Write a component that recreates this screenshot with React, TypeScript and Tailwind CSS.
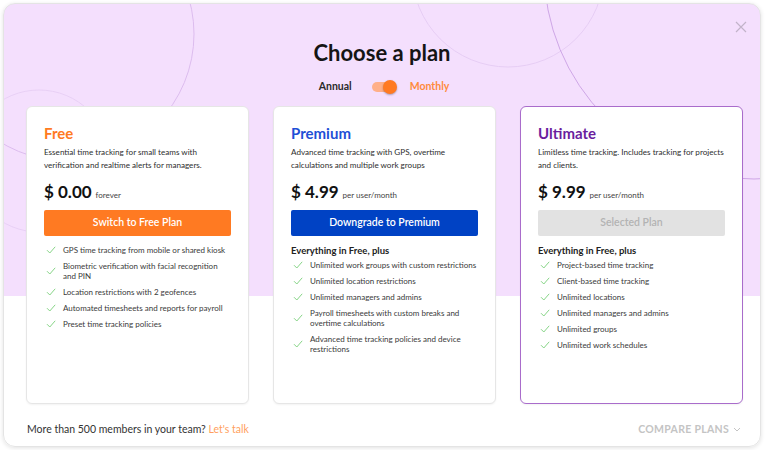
import React from 'react'

const plans = [
  {
    name: 'Free',
    nameColor: 'text-[#ff7a22]',
    desc: 'Essential time tracking for small teams with verification and realtime alerts for managers.',
    price: '$ 0.00',
    per: 'forever',
    button: 'Switch to Free Plan',
    buttonClass: 'bg-[#ff7a22] text-white',
    cardClass: 'border border-[#e6e6e6]',
    heading: '',
    features: [
      'GPS time tracking from mobile or shared kiosk',
      'Biometric verification with facial recognition and PIN',
      'Location restrictions with 2 geofences',
      'Automated timesheets and reports for payroll',
      'Preset time tracking policies',
    ],
  },
  {
    name: 'Premium',
    nameColor: 'text-[#1f4fd6]',
    desc: 'Advanced time tracking with GPS, overtime calculations and multiple work groups',
    price: '$ 4.99',
    per: 'per user/month',
    button: 'Downgrade to Premium',
    buttonClass: 'bg-[#0042c4] text-white',
    cardClass: 'border border-[#e6e6e6]',
    heading: 'Everything in Free, plus',
    features: [
      'Unlimited work groups with custom restrictions',
      'Unlimited location restrictions',
      'Unlimited managers and admins',
      'Payroll timesheets with custom breaks and overtime calculations',
      'Advanced time tracking policies and device restrictions',
    ],
  },
  {
    name: 'Ultimate',
    nameColor: 'text-[#6a1e9e]',
    desc: 'Limitless time tracking. Includes tracking for projects and clients.',
    price: '$ 9.99',
    per: 'per user/month',
    button: 'Selected Plan',
    buttonClass: 'bg-[#e2e2e2] text-[#b3b3b3]',
    cardClass: 'border-[1.5px] border-[#a96ccb]',
    heading: 'Everything in Free, plus',
    features: [
      'Project-based time tracking',
      'Client-based time tracking',
      'Unlimited locations',
      'Unlimited managers and admins',
      'Unlimited groups',
      'Unlimited work schedules',
    ],
  },
]

function Check() {
  return (
    <svg width="10" height="8" viewBox="0 0 10 8" className="flex-shrink-0">
      <path d="M1 4.2 L3.8 7 L9.2 0.8" fill="none" stroke="#86d486" strokeWidth="1" />
    </svg>
  )
}

export default function App() {
  return (
    <div className="w-[768px] h-[450px] bg-white p-[3px] font-['Lato',sans-serif]">
      <div className="relative w-[758px] h-[444px] rounded-[12px] border border-[#e4e4e4] shadow-[0_1px_4px_rgba(0,0,0,0.12)] overflow-hidden bg-[linear-gradient(to_bottom,#f4dffd_292px,#ffffff_292px)] flex flex-col">
        {/* decorative circles */}
        <svg className="absolute top-0 left-0" width="758" height="292" viewBox="0 0 758 292">
          <circle cx="63" cy="30" r="127" fill="none" stroke="#dcbcee" strokeWidth="1" />
          <circle cx="35" cy="157" r="71" fill="none" stroke="#e8d0f5" strokeWidth="1" />
          <circle cx="504" cy="-33" r="96" fill="none" stroke="#e6cdf4" strokeWidth="1" />
          <circle cx="750" cy="-35" r="210" fill="none" stroke="#cea6e6" strokeWidth="1" />
        </svg>

        {/* close */}
        <svg className="absolute top-[17px] right-[13px]" width="12" height="12" viewBox="0 0 12 12">
          <path d="M1 1 L11 11 M11 1 L1 11" stroke="#c2b3c9" strokeWidth="1.2" />
        </svg>

        {/* Header */}
        <div className="relative flex flex-col items-center pt-[35px]">
          <h1 className="text-[22px] leading-[28px] font-bold text-[#151515]">Choose a plan</h1>
          <div className="flex items-center mt-[12px] h-[16px] pl-[4px]">
            <span className="text-[10.5px] font-bold text-[#2a2a2a]">Annual</span>
            <div className="relative w-[25px] h-[14px] flex items-center ml-[20px] mr-[13px]">
              <div className="w-[24px] h-[10px] rounded-full bg-[#ffb089]" />
              <div className="absolute right-0 w-[14px] h-[14px] rounded-full bg-[#ff7a22] shadow-[0_1px_2px_rgba(0,0,0,0.3)]" />
            </div>
            <span className="text-[10.5px] font-bold text-[#ff8a3c]">Monthly</span>
          </div>
        </div>

        {/* Cards */}
        <div className="relative grid grid-cols-3 gap-[24px] pl-[22px] pr-[17px] mt-[11px]">
          {plans.map((p) => (
            <div
              key={p.name}
              className={`h-[298px] bg-white rounded-[6px] shadow-[0_1px_2px_rgba(0,0,0,0.05)] px-[17px] pt-[16px] ${p.cardClass}`}
            >
              <h2 className={`text-[15px] leading-[20px] font-bold ${p.nameColor}`}>{p.name}</h2>
              <p className="text-[8.1px] leading-[13px] text-[#2e2e2e] mt-[3px] h-[26px]">{p.desc}</p>
              <div className="flex items-baseline gap-[4px] mt-[10px]">
                <span className="text-[17px] leading-[20px] font-bold text-[#111]">{p.price}</span>
                <span className="text-[8px] text-[#444]">{p.per}</span>
              </div>
              <div
                className={`mt-[8px] h-[26px] rounded-[2px] flex items-center justify-center text-[10.5px] font-semibold ${p.buttonClass}`}
              >
                {p.button}
              </div>
              <div className="mt-[9px]">
                {p.heading && (
                  <div className="text-[9.5px] leading-[12px] font-bold text-[#222] mb-[3px]">{p.heading}</div>
                )}
                <ul className="flex flex-col gap-[6px] pl-[2px]">
                  {p.features.map((f) => (
                    <li key={f} className="flex items-center gap-[7px]">
                      <Check />
                      <span className="text-[8px] leading-[10px] text-[#3a3a3a]">{f}</span>
                    </li>
                  ))}
                </ul>
              </div>
            </div>
          ))}
        </div>

        {/* Footer */}
        <div className="relative flex items-center justify-between pl-[23px] pr-[19px] mt-[18px]">
          <span className="text-[10.5px] text-[#333]">
            More than 500 members in your team? <span className="text-[#ff9f5e]">Let's talk</span>
          </span>
          <span className="flex items-center gap-[4px] text-[10.5px] font-bold tracking-[0.3px] text-[#c4c4c4]">
            COMPARE PLANS
            <svg width="8" height="5" viewBox="0 0 8 5">
              <path d="M1 1 L4 4 L7 1" fill="none" stroke="#c4c4c4" strokeWidth="1" />
            </svg>
          </span>
        </div>
      </div>
    </div>
  )
}
